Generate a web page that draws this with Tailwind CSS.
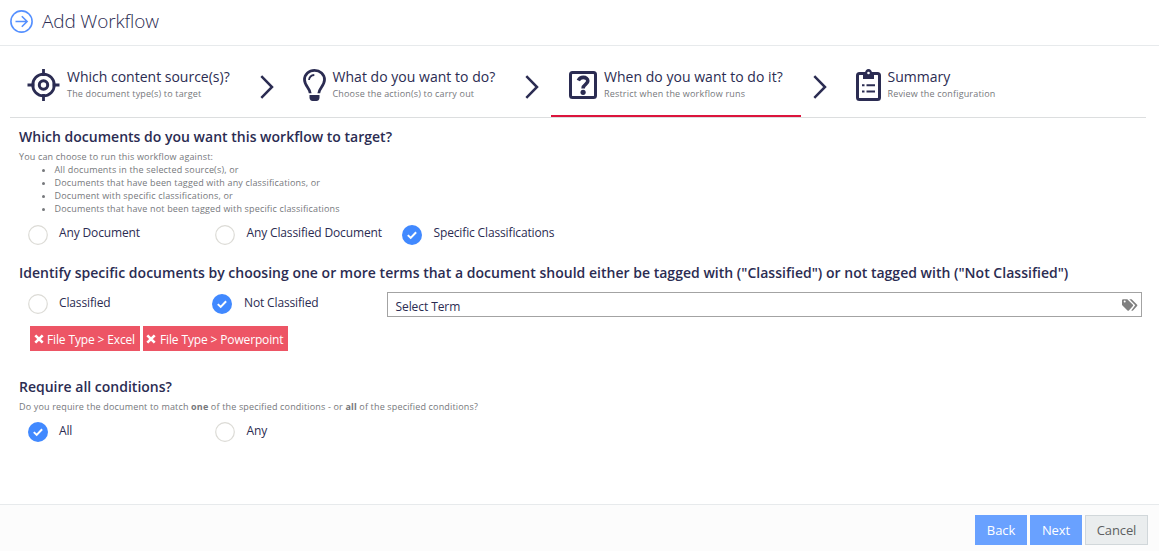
<!DOCTYPE html>
<html lang="en">
<head>
<meta charset="utf-8">
<title>Add Workflow</title>
<script src="https://cdn.jsdelivr.net/npm/@tailwindcss/browser@4"></script>
</head>
<body class="bg-white font-['Open_Sans',sans-serif] text-[#2b2c52]">
<svg class="hidden">
  <symbol id="on" viewBox="0 0 20 20"><circle cx="10" cy="10" r="10" fill="#4189ff"/><path d="M5.800 10.100l2.900 2.800L14.100 7.300" fill="none" stroke="#fff" stroke-width="2"/></symbol>
  <symbol id="off" viewBox="0 0 20 20"><circle cx="10" cy="10" r="9.300" fill="#fff" stroke="#dcdbd6" stroke-width="1.2"/></symbol>
  <symbol id="chev" viewBox="0 0 14 24"><path d="M1.300 1.200L12 12L1.300 22.800" fill="none" stroke="#2b2c52" stroke-width="2.500"/></symbol>
  <symbol id="x" viewBox="0 0 10 10"><path d="M1.300 1.300L8.700 8.700M8.700 1.300L1.300 8.700" stroke="#fff" stroke-width="2.600"/></symbol>
</svg>
<div class="flex h-[551px] w-[1159px] flex-col overflow-hidden">
  <header class="flex h-[46px] shrink-0 items-start border-b border-[#e7eaec] pl-[10px]">
    <svg class="mt-[10px] size-[23px]" viewBox="0 0 23 23" fill="none" stroke="#5590ff" stroke-width="1.600"><circle cx="11.500" cy="11.500" r="10.600"/><path d="M5.500 11.500H17M11.800 6.200L17.100 11.500L11.800 16.800"/></svg>
    <h1 class="ml-[9px] mt-[6px] whitespace-nowrap text-[19px] font-light leading-[30px] tracking-[-0.15px]">Add Workflow</h1>
  </header>

  <nav class="ml-[10px] flex h-[72px] w-[1136px] shrink-0 border-b border-[#dcdedf] whitespace-nowrap">
    <div class="flex w-[250px] pl-[17px]">
      <svg class="mt-[23px] h-8 w-[33px]" viewBox="0 0 33 32" fill="none" stroke="#2b2c52"><circle cx="16.500" cy="16" r="10.800" stroke-width="2.800"/><circle cx="16.500" cy="16" r="4.200" stroke-width="3"/><path d="M16.500 0V7M16.500 25V32M.5 16H7.500M25.500 16H32.500" stroke-width="2.800"/></svg>
      <div class="ml-[7px] mt-[21px]"><div class="text-[14px] leading-5">Which content source(s)?</div><div class="text-[9px] leading-[14px] tracking-[0.17px] text-[#76787c]">The document type(s) to target</div></div>
    </div>
    <div class="flex w-[291px]">
      <svg class="mt-[29px] h-6 w-[14px]"><use href="#chev"/></svg>
      <svg class="ml-[29px] mt-[23px] h-8 w-[23px]" viewBox="0 0 23 32" fill="none" stroke="#2b2c52"><path d="M7.200 24.200C7 19.500 1.500 16.500 1.500 10.800C1.500 5.300 6 1.400 11.500 1.400S21.500 5.300 21.500 10.800C21.500 16.500 16 19.500 15.800 24.200" stroke-width="2.800"/><path d="M6 11C6.300 8.100 8.300 6.200 11.300 6" stroke-width="1.800"/><path d="M6.500 26H16.500V29Q16 32 13.500 32H9.500Q7 32 6.500 29Z" fill="#2b2c52" stroke="none"/></svg>
      <div class="ml-[6.500px] mt-[21px]"><div class="text-[14px] leading-5 tracking-[0.03px]">What do you want to do?</div><div class="text-[9px] leading-[14px] tracking-[0.17px] text-[#76787c]">Choose the action(s) to carry out</div></div>
      <svg class="ml-auto mr-[12px] mt-[29px] h-6 w-[14px] shrink-0"><use href="#chev"/></svg>
    </div>
    <div class="flex h-[71px] w-[250px] border-b-2 border-[#dc143c] pl-[18px]">
      <svg class="mt-[25px] h-7 w-[28px]" viewBox="0 0 28 28"><rect x="1.500" y="1.500" width="25" height="25" rx="2" fill="none" stroke="#2b2c52" stroke-width="3"/><path d="M9.300 9.500C10.500 7.300 12.100 6.400 14.200 6.400C16.900 6.400 18.800 7.800 18.800 10.100C18.800 13.600 14.100 13.300 14.100 17.400" fill="none" stroke="#2b2c52" stroke-width="3.600"/><circle cx="14.100" cy="21.300" r="2.600" fill="#2b2c52"/></svg>
      <div class="ml-[7px] mt-[21px]"><div class="text-[14px] leading-5 tracking-[0.03px]">When do you want to do it?</div><div class="text-[9px] leading-[14px] tracking-[0.19px] text-[#76787c]">Restrict when the workflow runs</div></div>
    </div>
    <div class="flex pl-[12px]">
      <svg class="mt-[29px] h-6 w-[14px]"><use href="#chev"/></svg>
      <svg class="ml-[29px] mt-[23px] h-8 w-[25px]" viewBox="0 0 25 32"><rect x="1.500" y="4.500" width="22" height="26" rx="2" fill="none" stroke="#2b2c52" stroke-width="3"/><path d="M7 10V4.500H9C9 1.700 10.500 0 12.500 0S16 1.700 16 4.500H18V10Z" fill="#2b2c52"/><circle cx="12.500" cy="4" r="1.300" fill="#fff"/><path d="M6 16.300H8.500M10.500 16.300H19M6 22.500H8.500M10.500 22.500H19" stroke="#2b2c52" stroke-width="2.100"/></svg>
      <div class="ml-[6.500px] mt-[21px]"><div class="text-[14px] leading-5">Summary</div><div class="text-[9px] leading-[14px] tracking-[0.17px] text-[#76787c]">Review the configuration</div></div>
    </div>
  </nav>

  <main class="flex-1 whitespace-nowrap pl-[19px] text-[12px] tracking-[-0.14px]">
    <h2 class="mt-[9px] text-[14px] font-semibold leading-5 tracking-[0.01px]">Which documents do you want this workflow to target?</h2>
    <div class="mt-[3px] text-[9px] leading-[13px] tracking-[0.165px] text-[#76787c]">
      <p>You can choose to run this workflow against:</p>
      <ul class="list-disc pl-[35.500px]">
        <li>All documents in the selected source(s), or</li>
        <li>Documents that have been tagged with any classifications, or</li>
        <li>Document with specific classifications, or</li>
        <li>Documents that have not been tagged with specific classifications</li>
      </ul>
    </div>
    <div class="mt-[8px] flex h-[22px] pl-[9px] leading-[20px]">
      <div class="flex w-[187px]"><svg class="mt-[2px] size-5"><use href="#off"/></svg><span class="ml-[11px]">Any Document</span></div>
      <div class="flex w-[187px]"><svg class="mt-[2px] size-5"><use href="#off"/></svg><span class="ml-[11.500px]">Any Classified Document</span></div>
      <div class="flex"><svg class="mt-[2px] size-5"><use href="#on"/></svg><span class="ml-[11.500px]">Specific Classifications</span></div>
    </div>
    <h2 class="mt-[18px] text-[14px] font-semibold leading-5 tracking-[0.015px]">Identify specific documents by choosing one or more terms that a document should either be tagged with ("Classified") or not tagged with ("Not Classified")</h2>
    <div class="mt-[9px] flex h-[25px] pl-[9px] leading-[20px]">
      <div class="flex w-[184px]"><svg class="mt-[2px] size-5"><use href="#off"/></svg><span class="ml-[11px] mt-[1px]">Classified</span></div>
      <div class="flex w-[175px]"><svg class="mt-[2px] size-5"><use href="#on"/></svg><span class="ml-[12px] mt-[1px]">Not Classified</span></div>
      <div class="flex h-[25px] w-[755px] items-center justify-between border border-[#a3a3a3] pl-[7.500px] pr-[3px]"><span class="mt-[4px] tracking-[-0.08px]">Select Term</span>
        <svg class="mt-[1px] h-3 w-4" viewBox="0 0 16 12"><path d="M0 1.500Q0 .3 1.200 .3H5.300L10.900 5.700Q11.500 6.300 10.900 6.900L6.900 11.400Q6.200 12 5.500 11.400L0 6ZM2.700 1.600A1 1 0 1 0 2.700 3.600A1 1 0 1 0 2.700 1.600Z" fill="#808080" fill-rule="evenodd"/><path d="M7.300 .3H9.600L15.100 5.700Q15.700 6.300 15.100 6.900L11 11.400Q10.200 12.100 9.300 11.400L13.200 6.300Z" fill="#808080"/></svg>
      </div>
    </div>
    <div class="mt-[9px] flex h-[25px] gap-[3px] pl-[11px] leading-[26px] text-white">
      <div class="flex w-[110px] items-center bg-[#ed5565] pl-[4px]"><svg class="mr-[3px] mt-px size-[10px]"><use href="#x"/></svg><span class="mt-[3px]">File Type &gt; Excel</span></div>
      <div class="flex w-[145px] items-center bg-[#ed5565] pl-[3px]"><svg class="mr-[4px] mt-px size-[10px]"><use href="#x"/></svg><span class="mt-[3px]">File Type &gt; Powerpoint</span></div>
    </div>
    <h2 class="mt-[26px] text-[14px] font-semibold leading-5 tracking-normal">Require all conditions?</h2>
    <p class="mt-[3px] text-[9px] leading-[14px] tracking-[0.16px] text-[#76787c]">Do you require the document to match <b>one</b> of the specified conditions - or <b>all</b> of the specified conditions?</p>
    <div class="mt-[8px] flex h-[22px] pl-[9px] leading-[18px]">
      <div class="flex w-[187px]"><svg class="size-5"><use href="#on"/></svg><span class="ml-[11px]">All</span></div>
      <div class="flex"><svg class="size-5"><use href="#off"/></svg><span class="ml-[11.500px]">Any</span></div>
    </div>
  </main>

  <footer class="flex h-[47px] shrink-0 justify-end gap-[3px] border-t border-[#e7eaec] bg-[#fcfcfc] pr-[11px] pt-[10px] text-[13px]">
    <button class="h-[30px] w-[52px] bg-[#69a1ff] pt-[2px] tracking-[-0.1px] text-white">Back</button>
    <button class="h-[30px] w-[52px] bg-[#69a1ff] pt-[2px] tracking-[-0.1px] text-white">Next</button>
    <button class="h-[30px] w-[63px] border border-[#d1d7da] bg-[#eaedee] pt-[2px] tracking-[-0.1px] text-[#5d5f61]">Cancel</button>
  </footer>
</div>
</body>
</html>
